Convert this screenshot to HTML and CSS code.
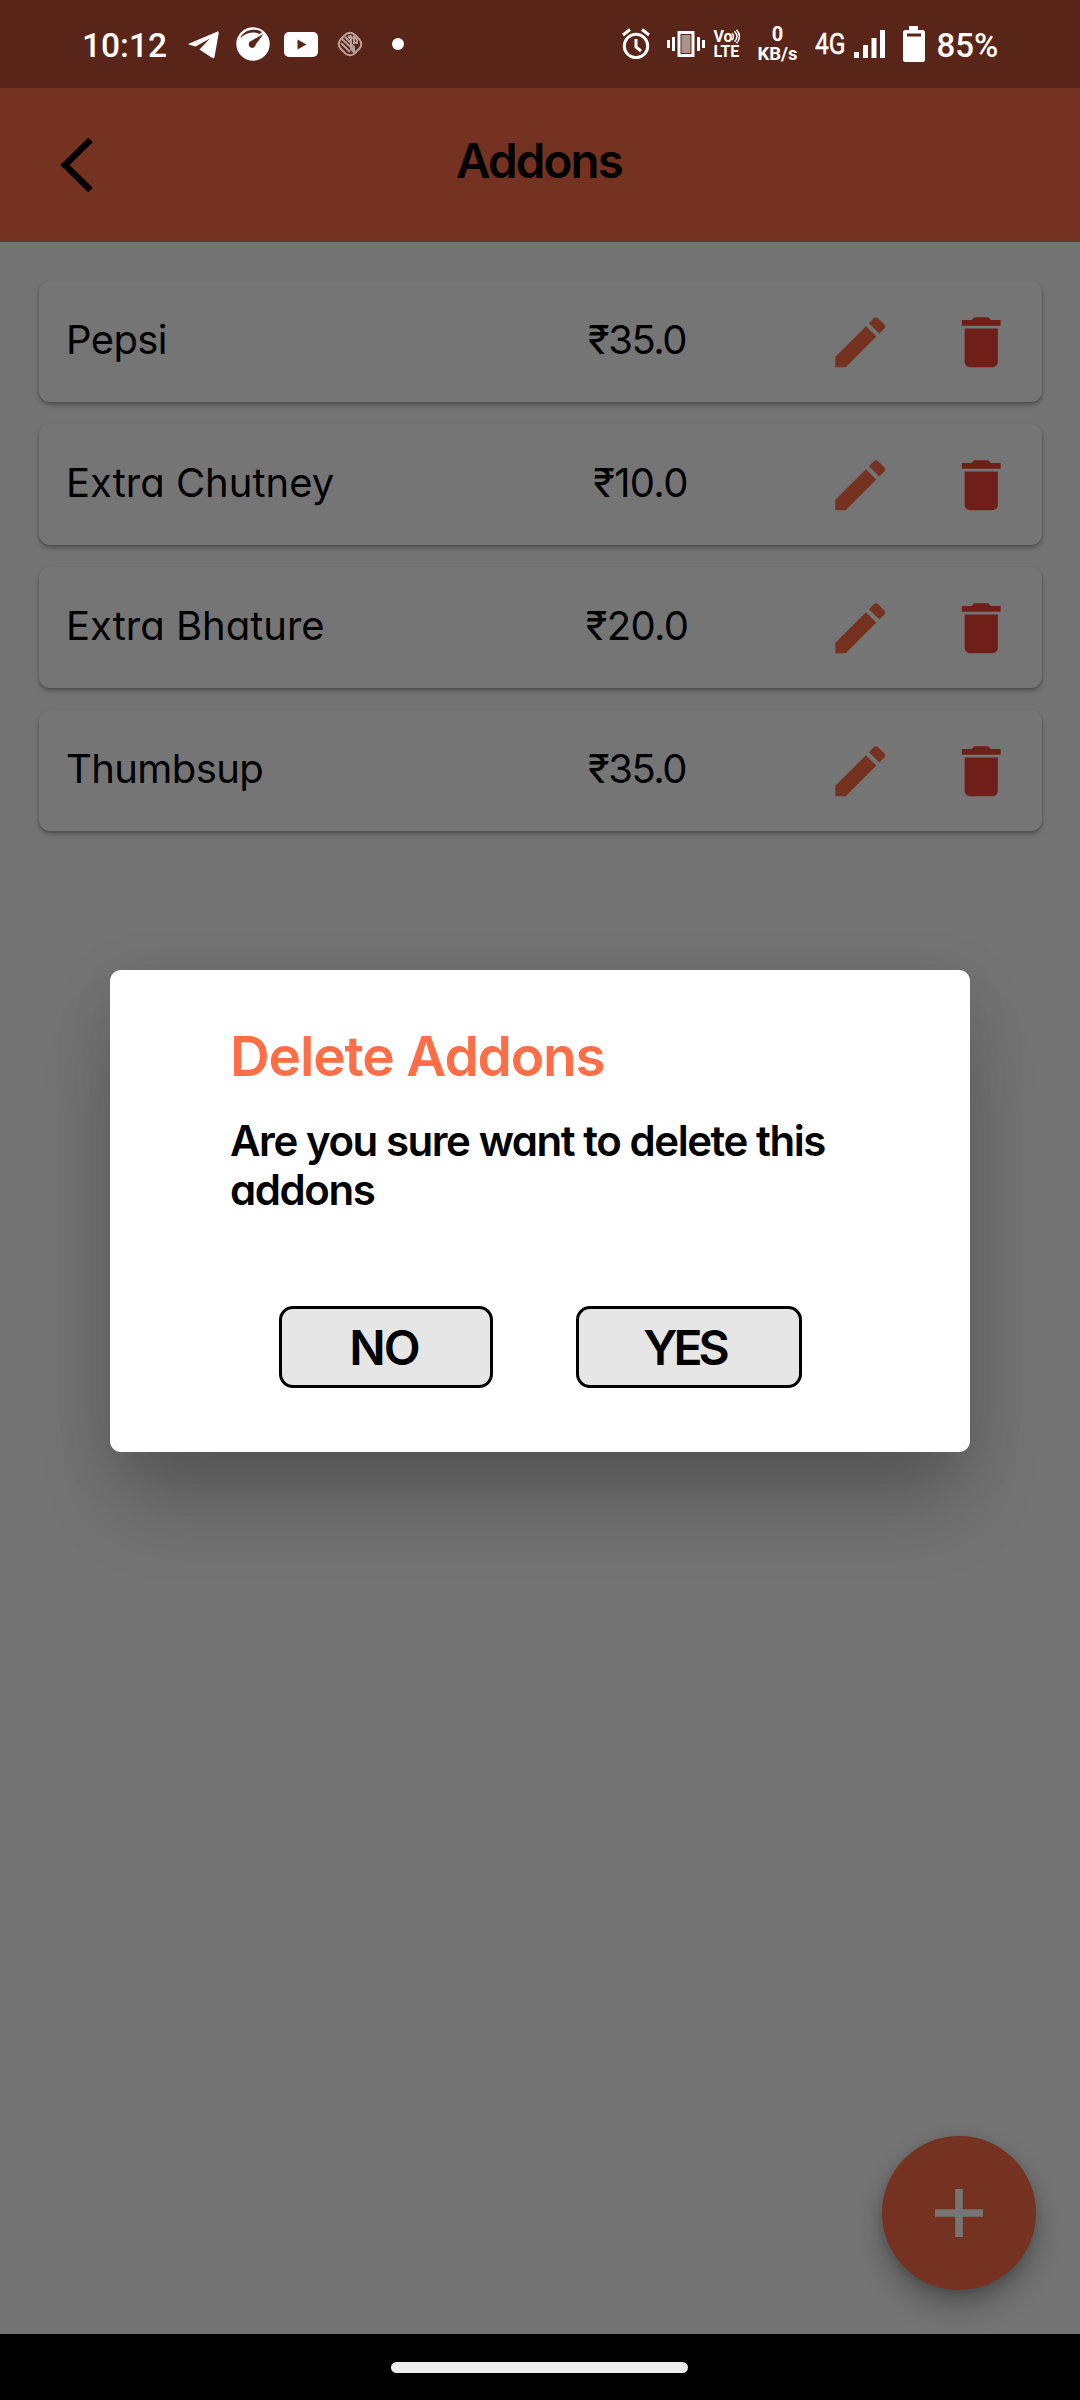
FILE: index.html
```html
<!DOCTYPE html>
<html lang="en">
<head>
<meta charset="utf-8">
<title>Addons</title>
<link rel="stylesheet" href="styles.css">
</head>
<body>
<svg class="sprite" width="0" height="0">
  <symbol id="edit" viewBox="0 0 24 24"><path d="M3 17.25V21h3.75L17.81 9.94l-3.75-3.75L3 17.25zM20.71 7.04a1 1 0 0 0 0-1.41l-2.34-2.34a1 1 0 0 0-1.41 0l-1.83 1.83 3.75 3.75 1.83-1.83z"/></symbol>
  <symbol id="trash" viewBox="0 0 24 24"><path d="M6 19c0 1.100.9 2 2 2h8c1.100 0 2-.9 2-2V7H6v12zM19 4h-3.500l-1-1h-5l-1 1H5v2h14V4z"/></symbol>
</svg>
<div class="screen">
  <div class="status">
    <div class="status-left">
      <span class="clock">10:12</span>
      <svg class="telegram" width="31" height="28" viewBox="0 0 31 28"><path d="M1.200 12.500 29 .7c1.300-.5 2 .2 1.700 1.500L26.500 26c-.3 1.300-1.500 1.600-2.600.8L11.500 18.500 22 7.500 7.500 15.500l-6.300-1.700c-.9-.4-.9-.9 0-1.300z"/></svg>
      <svg class="gauge" width="34" height="34" viewBox="0 0 34 34"><circle cx="17" cy="17" r="16.700"/><path class="cut" d="M4 10.500C9 2 20 1 26 5l-2 2C18 4 11 5.500 7 9zM27.500 7 19.700 17.500a3.500 3.500 0 1 1-5.200-3.200z"/></svg>
      <svg class="youtube" width="34" height="25" viewBox="0 0 34 25"><rect width="34" height="25" rx="5"/><path class="cut" d="M13.500 7.500v10l9-5z"/></svg>
      <svg class="swirl" width="26" height="26" viewBox="0 0 26 26"><path d="M8.500 3.500Q13 0 17.500 3.500l5 5Q26 13 22.500 17.500l-5 5Q13 26 8.500 22.500l-5-5Q0 13 3.500 8.500z"/><path d="M5 8l13 12M8 6l6 6v6l4 4M4 12l9 9M11 5l3 3v5l3 3v4M16 5q5 3 4 7h-3v-4q-3-1-4-4"/></svg>
      <span class="dot"></span>
    </div>
    <div class="status-right">
      <svg class="alarm" width="30" height="31" viewBox="0 0 30 31"><circle cx="15" cy="18" r="11.700"/><path d="M15 11v8l5 4M2 7l7-5.500M28 7l-7-5.500"/></svg>
      <svg class="vibrate" width="38" height="26" viewBox="0 0 38 26"><path d="M1.500 9v8M6.500 6v14M31.500 6v14M36.500 9v8"/><rect x="12" y="1.500" width="14" height="23"/><rect class="inner" x="14" y="3.500" width="10" height="19"/></svg>
      <div class="volte"><span class="vo">Vo<svg width="10" height="15" viewBox="0 0 10 15"><path d="M1 4q3 3.500 0 7M3.500 2.200q5 5.300 0 10.600M5.500.8q6 6.700 0 13.400"/></svg></span><span class="lte">LTE</span></div>
      <div class="speed"><span class="speed-value">0</span><span>KB/s</span></div>
      <span class="net"><span class="net-label">4G</span></span>
      <svg class="signal" width="32" height="28" viewBox="0 0 32 28"><path d="M0 22h5v6H0zM9 15h5v13H9zM17.500 8h5v20h-5zM26 0h5v28h-5z"/></svg>
      <svg class="battery" width="22" height="36" viewBox="0 0 22 36"><path d="M6 4V0h9v4h4.500Q22 4 22 6.500v27q0 2.500-2.500 2.500h-17Q0 36 0 33.500v-27Q0 4 2.500 4z"/><path class="cut" d="M4 7.500h14v3H4z"/></svg>
      <span class="percent">85%</span>
    </div>
  </div>
  <header class="appbar">
    <svg class="back" width="34" height="56" viewBox="0 0 34 56"><path d="M30.500 3 5 28l25.500 25"/></svg>
    <h1 class="title">Addons</h1>
  </header>
  <main class="list">
    <div class="card"><span class="name tight">Pepsi</span><span class="price tight">₹35.0</span><svg class="icon edit"><use href="#edit"/></svg><svg class="icon trash"><use href="#trash"/></svg></div>
    <div class="card"><span class="name">Extra Chutney</span><span class="price shifted">₹10.0</span><svg class="icon edit"><use href="#edit"/></svg><svg class="icon trash"><use href="#trash"/></svg></div>
    <div class="card"><span class="name">Extra Bhature</span><span class="price">₹20.0</span><svg class="icon edit"><use href="#edit"/></svg><svg class="icon trash"><use href="#trash"/></svg></div>
    <div class="card"><span class="name tight">Thumbsup</span><span class="price tight">₹35.0</span><svg class="icon edit"><use href="#edit"/></svg><svg class="icon trash"><use href="#trash"/></svg></div>
  </main>
  <div class="fab"><svg width="48" height="48" viewBox="0 0 48 48"><path d="M24 0v48M0 24h48"/></svg></div>
  <div class="scrim">
    <section class="dialog">
      <h2 class="dialog-title">Delete Addons</h2>
      <p class="dialog-text">Are you sure want to delete this<br>addons</p>
      <div class="actions"><button class="btn no">NO</button><button class="btn yes">YES</button></div>
    </section>
  </div>
  <footer class="nav"><span class="pill"></span></footer>
</div>
</body>
</html>
```
FILE: styles.css
```css
* { box-sizing: border-box; margin: 0; padding: 0; }
body { font-family: Inter, "Liberation Sans", sans-serif; font-feature-settings: "cv11"; color: #000; }
svg { display: block; flex: none; }
.sprite { display: none; }
.screen { position: relative; width: 1080px; height: 2400px; display: grid; grid-template-rows: 88px 154px 1fr 66px; background: #fafafa; overflow: hidden; }

.status { position: relative; z-index: 2; display: flex; justify-content: space-between; align-items: center; padding: 0 83.500px 0 82px; background: #592519; color: #fff; font-family: Roboto, sans-serif; white-space: nowrap; }
.status svg { fill: #fff; }
.status .cut { fill: #592519; }
.status-left, .status-right { display: flex; align-items: center; }
.clock { width: 84px; font-size: 33.500px; font-weight: 500; padding-top: 2px; }
.telegram { margin: 2px 0 0 22px; }
.gauge { margin-left: 17px; }
.youtube { margin-left: 14px; }
.status .swirl { margin-left: 19px; fill: none; stroke: #b9a19b; stroke-width: 2; }
.dot { width: 12px; height: 12px; border-radius: 50%; background: #fff; margin-left: 29px; }
.status .alarm { fill: none; stroke: #fff; stroke-width: 3; margin-bottom: 1px; }
.status .vibrate { margin-left: 16px; stroke: #fff; stroke-width: 3; }
.status .vibrate .inner { fill: #ac928c; stroke: #592519; stroke-width: 1; }
.volte { width: 27px; margin-left: 9px; font-size: 16px; font-weight: 700; line-height: 15px; display: flex; flex-direction: column; }
.vo { display: flex; }
.vo svg { fill: none; stroke: #fff; stroke-width: 1.500; margin-left: -1.500px; }
.speed { width: 42px; margin-left: 16px; font-size: 18.500px; font-weight: 700; line-height: 20px; display: flex; flex-direction: column; align-items: center; }
.speed-value { font-size: 20px; }
.net { width: 31px; margin-left: 16px; font-size: 30px; font-weight: 400; padding-bottom: 1px; }
.net-label { display: inline-block; transform: scaleX(.82); transform-origin: 0 50%; -webkit-text-stroke: .5px #fff; }
.signal { margin-left: 8px; }
.battery { margin-left: 17px; }
.percent { width: 60px; margin-left: 12px; font-size: 33px; font-weight: 500; padding-top: 2px; }

.appbar { display: grid; grid-template-columns: 60px 1fr 60px; align-items: center; background: #ff6e46; }
.back { margin-left: 60px; fill: none; stroke: #000; stroke-width: 6.500; }
.title { text-align: center; font-size: 47.500px; font-weight: 600; line-height: 56px; letter-spacing: -1.900px; padding: 0 2px 8px 0; }

.list { display: flex; flex-direction: column; gap: 22px; padding: 39px 38px 0 39px; }
.card { display: flex; align-items: center; height: 121px; padding-left: 27px; border-radius: 11px; background: #fff; box-shadow: 0 3px 4px rgba(0, 0, 0, .28), 0 1px 2px rgba(0, 0, 0, .1); font-size: 40px; white-space: nowrap; }
.name { width: 490px; padding-bottom: 4px; }
.price { width: 162px; text-align: center; padding-bottom: 5px; letter-spacing: -.7px; }
.name.tight { letter-spacing: -.6px; }
.price.tight { letter-spacing: -1.500px; }
.shifted { padding-left: 7px; }
.icon { width: 66.500px; height: 66.500px; margin-top: 1px; }
.edit { margin-left: 109px; fill: #ff6e46; }
.trash { margin-left: 54px; fill: #f44336; }

.fab { position: absolute; left: 882px; top: 2136px; width: 154px; height: 154px; display: flex; align-items: center; justify-content: center; border-radius: 50%; background: #ff6e46; box-shadow: 0 16px 28px rgba(0, 0, 0, .26), 0 3px 12px rgba(0, 0, 0, .16); }
.fab svg { stroke: #fff; stroke-width: 7.500; }

.scrim { position: absolute; inset: 0 0 66px; z-index: 1; display: flex; align-items: center; justify-content: center; padding-top: 88px; background: rgba(0, 0, 0, .54); }
.dialog { width: 860px; height: 482px; padding: 53px 0 0 120px; border-radius: 11px; background: #fff; box-shadow: 0 60px 75px -12px rgba(0, 0, 0, .21), 0 12px 60px rgba(0, 0, 0, .11); white-space: nowrap; }
.dialog-title { color: #ff6e46; font-size: 55px; font-weight: 600; line-height: 66px; letter-spacing: -1.150px; }
.dialog-text { margin-top: 27px; font-size: 42px; font-weight: 600; line-height: 49px; letter-spacing: -1.450px; }
.actions { display: flex; gap: 83px; margin: 92px 0 0 48.500px; }
.btn { height: 82px; border: 3px solid #000; border-radius: 14px; background: #e6e6e6; color: #000; font: 600 48px Inter, sans-serif; letter-spacing: -2px; padding-right: 3px; }
.no { width: 214px; }
.yes { width: 226px; letter-spacing: -4px; padding-right: 8px; }

.nav { grid-row: 4; display: flex; align-items: center; justify-content: center; background: #000; }
.pill { width: 297px; height: 11px; margin-right: 2px; border-radius: 6px; background: #ececec; }
```
